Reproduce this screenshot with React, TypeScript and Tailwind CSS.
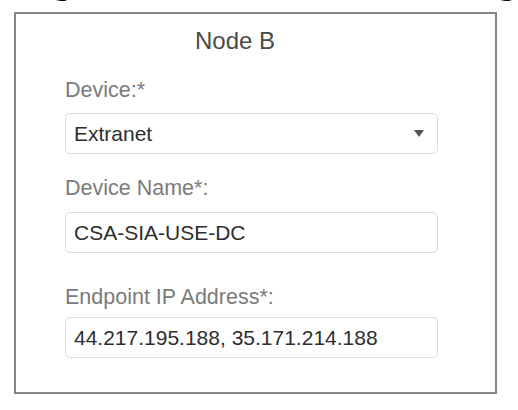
const FONT = "font-['Liberation_Sans',Arial,sans-serif]";

function Label({ children, className = '' }: { children: React.ReactNode; className?: string }) {
  return <div className={`h-[24px] text-[21.5px] leading-[24px] text-[#7b7b7b] ${className}`}>{children}</div>;
}

function Field({ value, select = false, className = '' }: { value: string; select?: boolean; className?: string }) {
  return (
    <div className={`flex h-[41px] w-[373px] items-center rounded-[5px] border-[1.5px] border-[#dcdcdc] bg-white pl-[8px] pr-[13px] ${className}`}>
      <span className="flex-1 truncate text-[21px] leading-[24px] text-[#2e2e2e]">{value}</span>
      {select && (
        <svg width="10" height="7" viewBox="0 0 10 7" className="shrink-0">
          <path d="M0 0 H10 L5 7 Z" fill="#555" />
        </svg>
      )}
    </div>
  );
}

export default function App() {
  return (
    <div className={`h-[410px] w-[518px] overflow-hidden bg-white ${FONT}`}>
      {/* cropped heading above the card */}
      <div className="h-[12px] overflow-hidden">
        <div className="-mt-[41px] flex text-[40px] font-bold leading-none text-black">
          <span className="ml-[50px]">g</span>
          <span className="ml-[420px]">g</span>
        </div>
      </div>

      <div className="ml-[14px] h-[382px] w-[483px] border-2 border-[#858585] pl-[49px]">
        <div className="pl-[130px] pt-[13px] text-[24px] leading-[28px] text-[#4a4a4a]">Node B</div>

        <Label className="mt-[23px]">Device:*</Label>
        <Field value="Extranet" select className="mt-[11px]" />

        <Label className="mt-[22px]">Device Name*:</Label>
        <Field value="CSA-SIA-USE-DC" className="mt-[12px]" />

        <Label className="mt-[32px]">Endpoint IP Address*:</Label>
        <Field value="44.217.195.188, 35.171.214.188" className="mt-[8px]" />
      </div>
    </div>
  );
}
